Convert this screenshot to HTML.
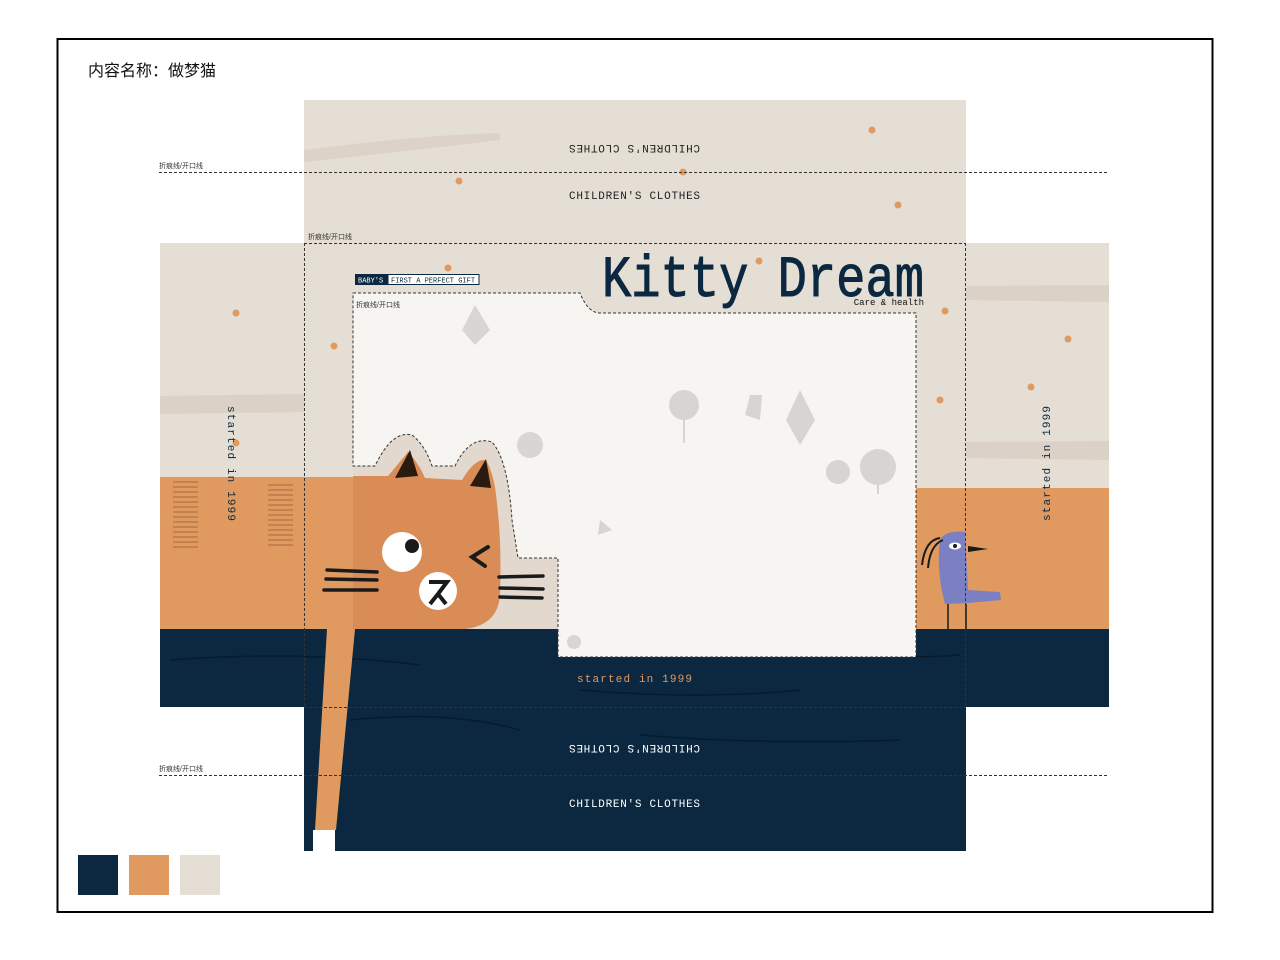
<!DOCTYPE html>
<html><head><meta charset="utf-8"><style>
html,body{margin:0;padding:0;background:#fff;width:1280px;height:960px;overflow:hidden}
svg{display:block}
.m{font-family:"Liberation Mono","DejaVu Sans Mono",monospace}
.c{font-family:"Liberation Sans","Noto Sans CJK SC",sans-serif}
</style></head><body>
<svg width="1280" height="960" viewBox="0 0 1280 960" xmlns="http://www.w3.org/2000/svg">
<rect x="57.5" y="39" width="1155" height="873" fill="#fff" stroke="#000" stroke-width="2"/>
<text x="88" y="76" class="c" font-size="16" fill="#111">内容名称：做梦猫</text>

<rect x="304" y="100" width="662" height="143" fill="#e5ded5"/>
<path d="M304 150 Q420 135 500 133 L500 140 Q400 152 304 162Z" fill="#dcd2c7"/>
<rect x="160" y="243" width="949" height="464" fill="#e5ded5"/>
<path d="M160 396 L304 394 L304 412 L160 414Z" fill="#dbd1c6"/>
<path d="M966 286 L1109 285 L1109 302 L966 300Z" fill="#dbd1c6"/>
<path d="M966 442 L1109 441 L1109 460 L966 458Z" fill="#dbd1c6"/>
<rect x="160" y="477" width="400" height="152" fill="#e09a60"/>
<rect x="916" y="488" width="193" height="141" fill="#e09a60"/>
<rect x="160" y="629" width="806" height="78" fill="#0b2840"/>
<rect x="966" y="629" width="143" height="78" fill="#0b2840"/>
<rect x="304" y="707" width="662" height="144" fill="#0b2840"/>
<g stroke="#06192a" stroke-width="1.5" fill="none" opacity=".8">
<path d="M170 660 Q300 650 420 665"/><path d="M580 690 Q700 700 800 690"/><path d="M640 735 Q760 745 900 740"/><path d="M350 720 Q450 710 520 730"/><path d="M850 650 Q900 660 960 655"/>
</g>
<!-- window -->
<path d="M353 293 L580 293 Q588 313 600 313 L916 313 L916 657 L558 657 L558 629 L353 629Z" fill="#f7f5f2"/>
<g fill="#d4d2cf" opacity=".9">
<circle cx="684" cy="405" r="15"/><rect x="683" y="415" width="2" height="28"/>
<circle cx="878" cy="467" r="18"/><rect x="877" y="480" width="2" height="14"/>
<circle cx="838" cy="472" r="12"/>
<path d="M800 390 L786 420 L800 445 L815 420Z"/>
<path d="M475 305 L462 330 L475 345 L490 330Z"/>
<circle cx="530" cy="445" r="13"/>
<path d="M600 520 L612 530 L598 535Z"/>
<circle cx="574" cy="642" r="7"/>
<path d="M750 395 L745 415 L760 420 L762 395Z"/>
</g>
<!-- halo -->
<path d="M353 466 L375 466 Q392 430 412 435 Q425 445 432 466 L455 466 Q470 435 492 442 Q508 460 512 520 L518 558 L558 558 L558 629 L353 629Z" fill="#e2d8cd"/>
<path d="M353 293 L580 293 Q588 313 600 313 L916 313 L916 657 L558 657 L558 558 L518 558 L512 520 Q508 460 492 442 Q470 435 455 466 L432 466 Q425 445 412 435 Q392 430 375 466 L353 466 Z" fill="none" stroke="#333" stroke-width="1" stroke-dasharray="3 2"/>
<!-- cat head -->
<path d="M353 476 L388 476 L408 452 Q418 462 425 478 L462 480 Q475 458 486 460 Q494 475 496 495 Q502 540 500 595 Q498 625 465 629 L353 629Z" fill="#d98c55"/>
<path d="M395 478 L410 450 L418 476Z" fill="#2a1a10"/><path d="M470 486 L486 459 L491 488Z" fill="#2a1a10"/>
<circle cx="402" cy="552" r="20" fill="#fff"/><circle cx="412" cy="546" r="7" fill="#1a1a1a"/>
<path d="M488 547 L472 557 L485 566" stroke="#1a1a1a" stroke-width="4" fill="none" stroke-linecap="round"/>
<circle cx="438" cy="591" r="19" fill="#fff"/>
<path d="M429 582 L447 582 L438 594 L430 604 M438 594 L446 604" stroke="#1a1a1a" stroke-width="4" fill="none"/>
<g stroke="#1a1a1a" stroke-width="3.5" stroke-linecap="round"><path d="M327 570 L377 572"/><path d="M326 579 L377 580"/><path d="M324 590 L377 590"/><path d="M499 577 L543 576"/><path d="M500 588 L543 589"/><path d="M500 597 L542 598"/></g>
<path d="M327 629 L355 629 L336 830 L315 830Z" fill="#e09a60"/>
<rect x="313" y="830" width="22" height="21" fill="#fff"/>
<g stroke="#8a5530" stroke-width="1" opacity=".7">
<path d="M173 482 h25 M173 487 h25 M173 492 h25 M173 497 h25 M173 502 h25 M173 507 h25 M173 512 h25 M173 517 h25 M173 522 h25 M173 527 h25 M173 532 h25 M173 537 h25 M173 542 h25 M173 547 h25"/>
<path d="M268 485 h25 M268 490 h25 M268 495 h25 M268 500 h25 M268 505 h25 M268 510 h25 M268 515 h25 M268 520 h25 M268 525 h25 M268 530 h25 M268 535 h25 M268 540 h25 M268 545 h25"/>
</g>
<!-- bird -->
<path d="M940 540 Q945 530 965 532 L968 590 L1000 592 L1001 600 L968 603 L945 604 Q936 570 940 540Z" fill="#7a80c2"/>
<path d="M968 546 L988 549 L968 552Z" fill="#1a1a1a"/>
<ellipse cx="955" cy="546" rx="6" ry="3.5" fill="#fff"/><circle cx="955" cy="546" r="2" fill="#1a1a1a"/>
<path d="M940 538 Q925 540 922 565 M943 540 Q930 545 928 568" stroke="#1a1a1a" stroke-width="2" fill="none"/>
<path d="M948 604 L948 629 M966 604 L966 629" stroke="#1a1a1a" stroke-width="1.5"/>
<g fill="#e09a60"><circle cx="872" cy="130" r="3.5"/><circle cx="459" cy="181" r="3.5"/><circle cx="683" cy="172" r="3.5"/><circle cx="898" cy="205" r="3.5"/><circle cx="448" cy="268" r="3.5"/><circle cx="759" cy="261" r="3.5"/><circle cx="236" cy="313" r="3.5"/><circle cx="334" cy="346" r="3.5"/><circle cx="945" cy="311" r="3.5"/><circle cx="1068" cy="339" r="3.5"/><circle cx="1031" cy="387" r="3.5"/><circle cx="940" cy="400" r="3.5"/><circle cx="236" cy="443" r="3.5"/></g>
<g stroke="#333" stroke-width="1" stroke-dasharray="3 2" fill="none">
<path d="M159 172.5 H1109"/><path d="M159 775.5 H1109"/>
<path d="M304 243.5 H966"/><path d="M304.5 243 V707"/><path d="M965.5 243 V707"/><path d="M304 707.5 H966"/>
</g>
<g class="c" font-size="7" fill="#333"><text x="159" y="168">折痕线/开口线</text><text x="308" y="239">折痕线/开口线</text><text x="356" y="307">折痕线/开口线</text><text x="159" y="771">折痕线/开口线</text></g>
<text x="569" y="199" class="m" font-size="11" fill="#222" textLength="131">CHILDREN'S CLOTHES</text>
<text transform="translate(700,145) rotate(180)" class="m" font-size="11" fill="#222" textLength="131">CHILDREN'S CLOTHES</text>
<text x="569" y="807" class="m" font-size="11" fill="#fff" textLength="131">CHILDREN'S CLOTHES</text>
<text transform="translate(700,745) rotate(180)" class="m" font-size="11" fill="#fff" textLength="131">CHILDREN'S CLOTHES</text>
<text x="577" y="682" class="m" font-size="11" fill="#e09a60" textLength="115">started in 1999</text>
<text transform="translate(228,406) rotate(90)" class="m" font-size="11" fill="#0b2840" textLength="115">started in 1999</text>
<text transform="translate(1050,521) rotate(-90)" class="m" font-size="11" fill="#0b2840" textLength="115">started in 1999</text>
<text x="602" y="296" class="m" font-size="58" fill="#0b2840" textLength="322" lengthAdjust="spacingAndGlyphs" stroke="#0b2840" stroke-width="1">Kitty Dream</text>
<text x="924" y="305" class="m" font-size="9" fill="#111" text-anchor="end">Care &amp; health</text>
<rect x="355" y="274" width="33" height="11" fill="#0b2840"/>
<rect x="388" y="274.5" width="91" height="10" fill="#fff" stroke="#0b2840"/>
<text x="358" y="282.5" class="m" font-size="7" fill="#fff">BABY'S</text>
<text x="391" y="282.5" class="m" font-size="7" fill="#0b2840">FIRST A PERFECT GIFT</text>
<rect x="78" y="855" width="40" height="40" fill="#0b2840"/><rect x="129" y="855" width="40" height="40" fill="#e09a60"/><rect x="180" y="855" width="40" height="40" fill="#e5ded5"/>
</svg>
</body></html>
